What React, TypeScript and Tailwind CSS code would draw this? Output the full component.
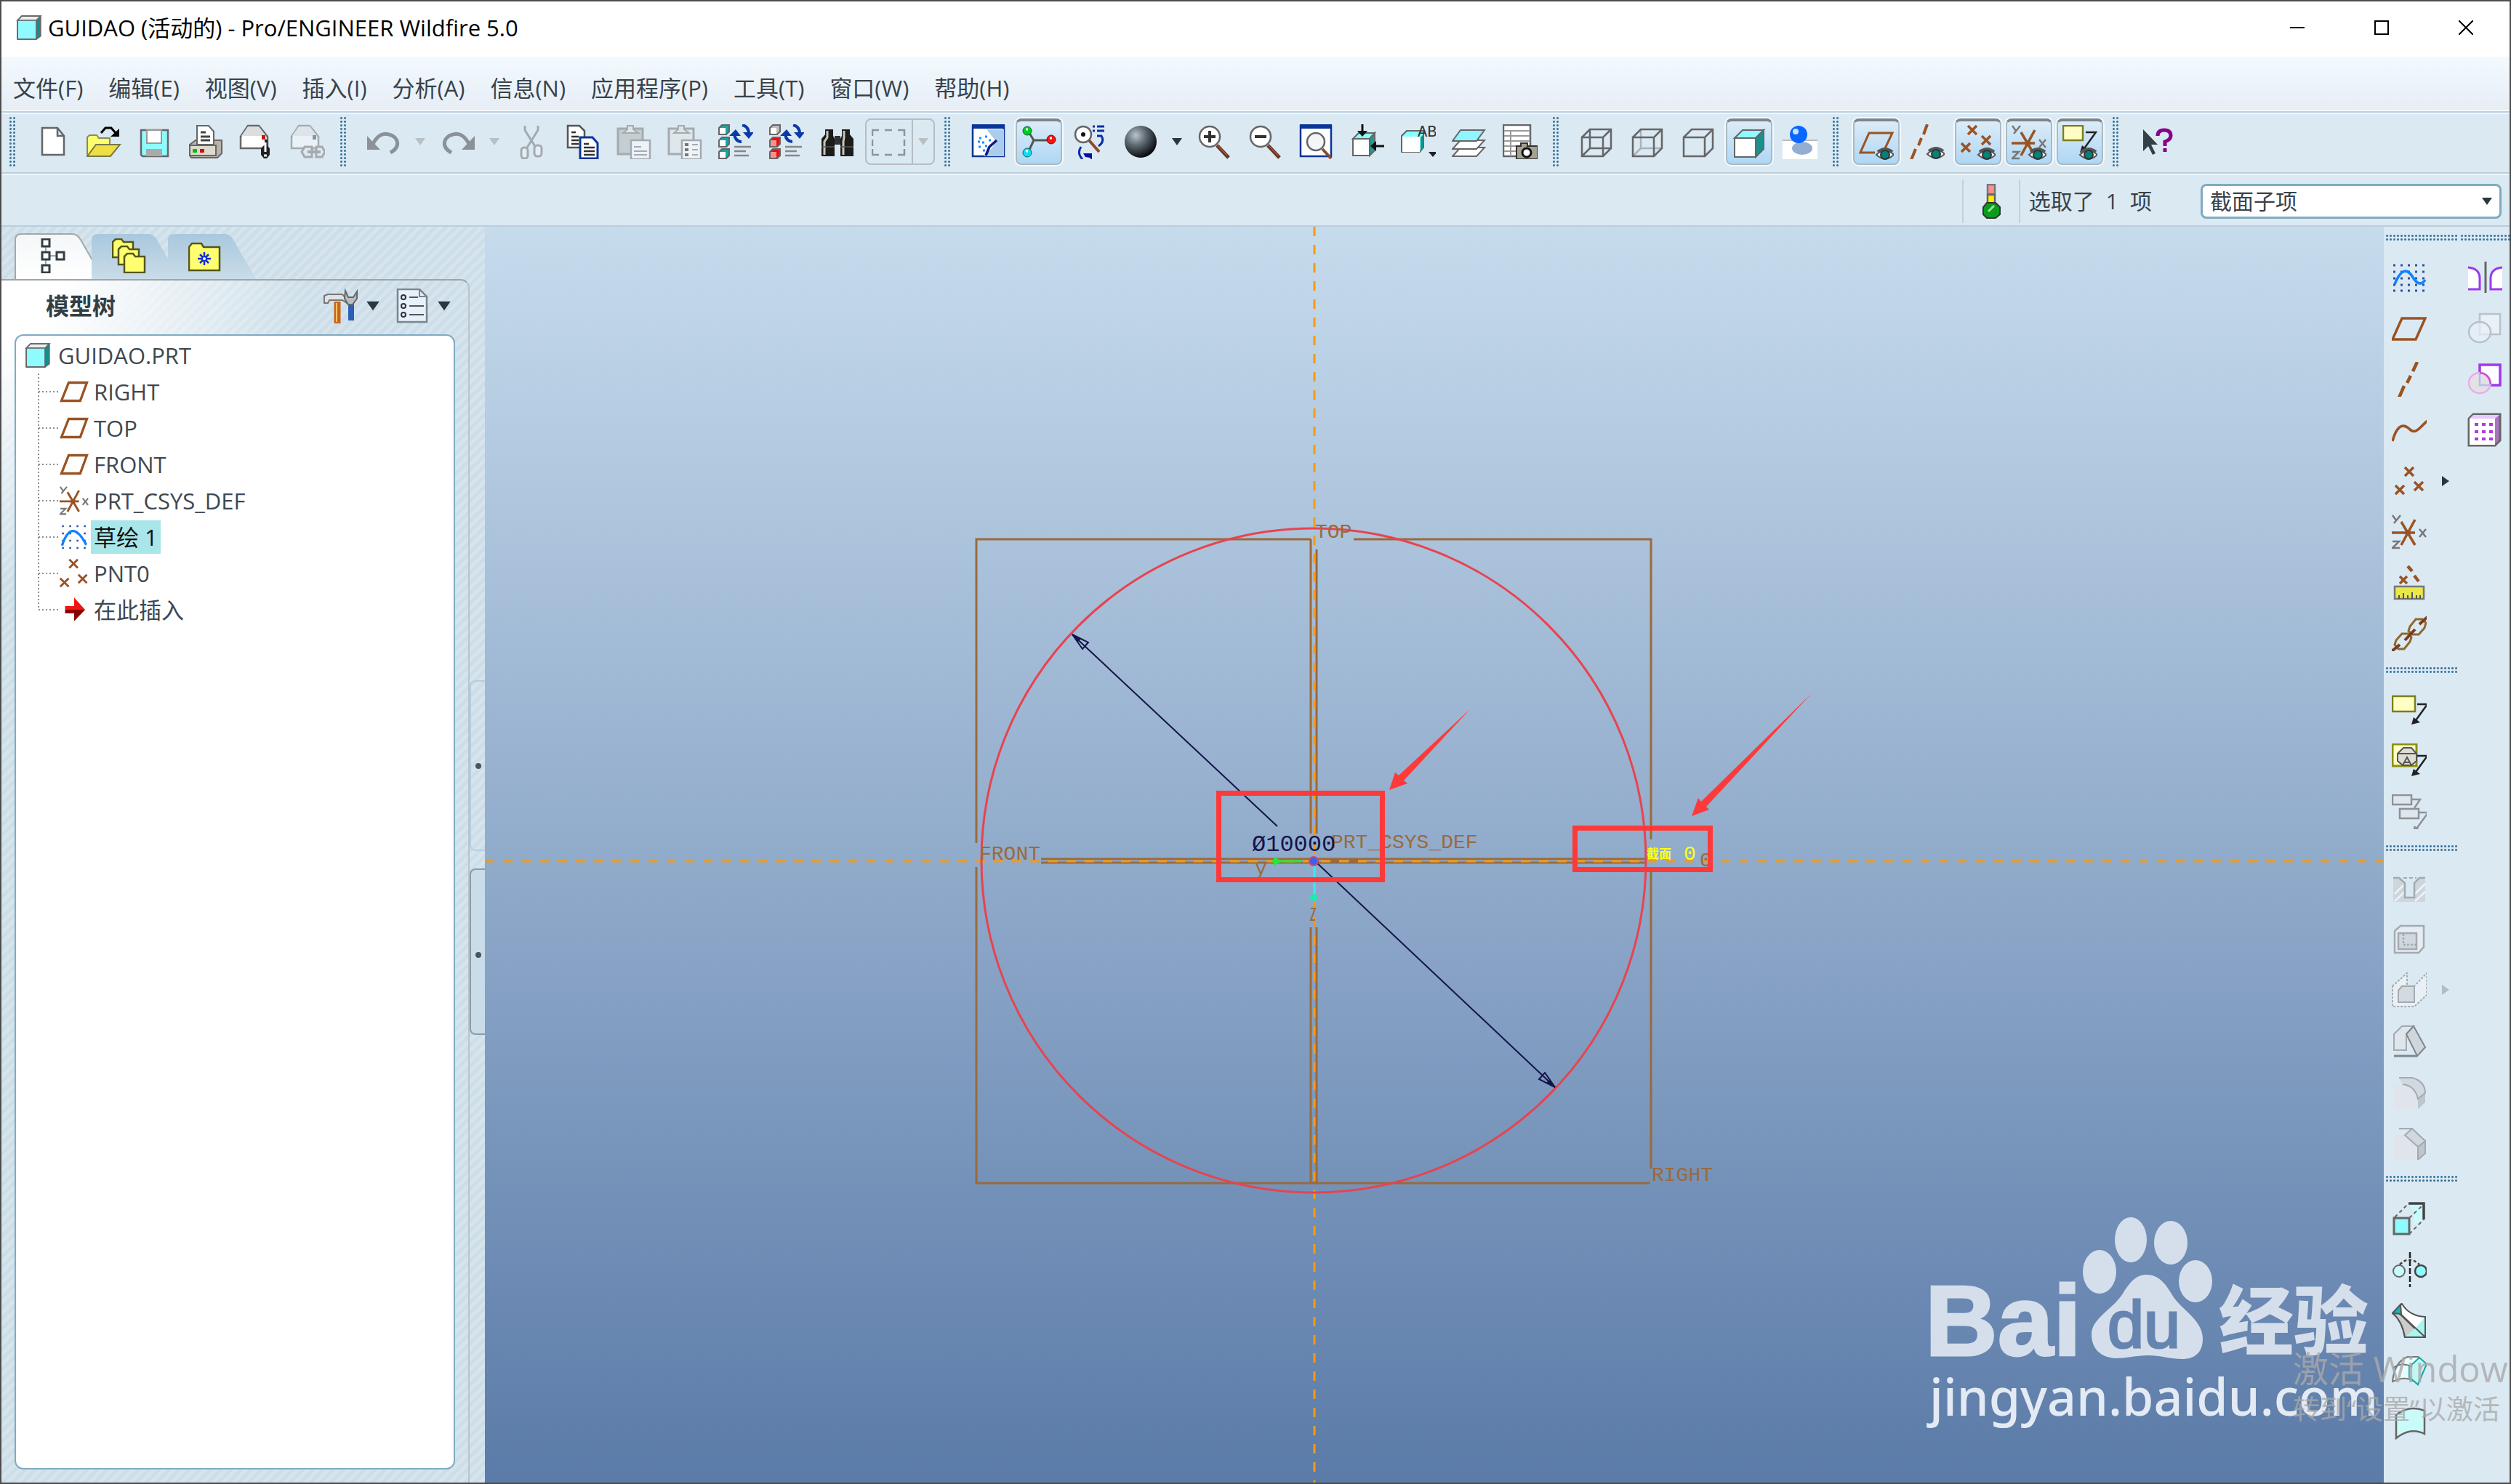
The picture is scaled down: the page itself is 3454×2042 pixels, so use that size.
import React from 'react';

type IconProps = { children: React.ReactNode; size?: string };

const Svg = ({ children, size = 'size-12' }: IconProps) => (
  <svg viewBox="0 0 48 48" className={`${size} shrink-0`} fill="none" aria-hidden="true">
    {children}
  </svg>
);

const BROWN = '#9a5323';
const GRAY = '#666666';
const DIM = '#a3abb0';

/* ---------- shared icon parts ---------- */

const Eye = () => (
  <g>
    <path d="M24 41Q36 29 48 41Q36 52 24 41Z" fill="#fff" stroke="#555" strokeWidth="2" />
    <path d="M26 37Q36 29 46 37" stroke="#555" strokeWidth="4" />
    <circle cx="36" cy="41" r="6" fill="#00837a" stroke="#333" strokeWidth="2" />
  </g>
);

const Lens = ({ sign }: { sign?: string }) => (
  <g>
    <path d="M27 29L43 46" stroke="#6b3322" strokeWidth="5" />
    <path d="M28 29L41 43" stroke="#b88466" strokeWidth="1" />
    <circle cx="17" cy="17" r="14" fill="#fff" stroke={GRAY} strokeWidth="2.5" />
    {sign && <path d={sign} stroke="#333" strokeWidth="4" />}
  </g>
);

const Marks = ({ at, s = 5 }: { at: number[][]; s?: number }) => (
  <path
    d={at.map(([x, y]) => `M${x - s} ${y - s}L${x + s} ${y + s}M${x + s} ${y - s}L${x - s} ${y + s}`).join('')}
    stroke={BROWN}
    strokeWidth="3.5"
  />
);

const Csys = () => (
  <g>
    <path d="M0 25H32M13 10L32 42M32 7L13 42" stroke={BROWN} strokeWidth="3.5" />
    <circle cx="22" cy="25" r="4" fill={BROWN} />
    <path d="M1 1L6 8M12 1L3 12M38 20L47 31M47 20L38 31M1 37H10L1 46H11" stroke="#777" strokeWidth="2.5" />
  </g>
);

const Leader = ({ x = 24, y = 12, color = '#222' }) => (
  <g transform={`translate(${x} ${y})`}>
    <path d="M10 0H24L6 25" stroke={color} strokeWidth="2.5" />
    <path d="M2 28L5 18L14 25Z" fill={color} />
  </g>
);

const Arrows = () => (
  <g>
    <path d="M22 14Q24 24 32 24M33 1Q42 3 42 13" stroke="#0a3aa8" strokeWidth="4" />
    <path d="M15 16L24 7L31 16ZM34 11H49L42 20Z" fill="#0a3aa8" />
    <path d="M22 31H45M22 37H38M22 43H42" stroke="#888" strokeWidth="2.5" />
  </g>
);

const MiniCube = ({ y, front, side }: { y: number; front: string; side: string }) => (
  <g>
    <path d={`M1 ${y + 4}L5 ${y}H15V${y + 9}L11 ${y + 13}H1Z`} fill={side} stroke={GRAY} strokeWidth="2" />
    <path d={`M2 ${y + 4}H10V${y + 12}H2Z`} fill={front} />
  </g>
);

const Envelope = ({ dim }: { dim?: boolean }) => (
  <g>
    <path d="M2 33V17L12 2H27L39 17V33Z" fill={dim ? '#eaf1f7' : '#fff'} stroke={dim ? DIM : GRAY} strokeWidth="2.5" />
    <path d="M3 16L12 3H27L37 16Z" fill={dim ? '#dde5ea' : '#ddd'} />
    <path d="M31 15H36V21H31Z" fill={dim ? '#8a9298' : '#c11'} />
  </g>
);

const Clipboard = ({ fill }: { fill: string }) => (
  <g>
    <path d="M2 6H36V41H2Z" fill={fill} stroke={DIM} strokeWidth="3" />
    <path d="M9 12L15 7V2H23V7L30 12Z" fill="#dfe6ea" stroke={DIM} strokeWidth="2" />
    <path d="M20 22H46V48H20Z" fill="#eef3f8" stroke={DIM} strokeWidth="2.5" />
  </g>
);

const ShadedCube = ({ front, top }: { front: string; top: string }) => (
  <g stroke={GRAY} strokeWidth="2">
    <path d="M4 18L15 7H44L33 18Z" fill={top} />
    <path d="M33 18L44 7V33L33 44Z" fill="#1b8f8c" />
    <path d="M4 18H33V44H4Z" fill={front} />
  </g>
);

const Caret = ({ dim, size = 'w-4 h-3' }: { dim?: boolean; size?: string }) => (
  <svg viewBox="0 0 16 12" className={size} aria-hidden="true">
    <path d="M1 1H15L8 11Z" fill={dim ? '#b9c0c4' : '#2c363c'} />
  </svg>
);

/* ---------- icon drawings ---------- */

const icons: Record<string, React.ReactNode> = {
  new: <path d="M9 5H30L39 16V42H9ZM30 5V16H39" fill="#fff" stroke={GRAY} strokeWidth="2.5" />,
  open: (
    <g>
      <path d="M1 44V18L4 15H14L17 19H32V30" fill="#ffff6e" stroke="#8a8a60" strokeWidth="2" />
      <path d="M1 44L13 28H46L33 44Z" fill="#efdf45" stroke="#77774a" strokeWidth="2" />
      <path d="M20 12L26 5H34L40 12" stroke="#000" strokeWidth="3" />
      <path d="M45 6V17H33Z" fill="#000" />
    </g>
  ),
  save: (
    <g>
      <path d="M5 8H42V44H7L5 42Z" fill="#8ffbff" stroke={GRAY} strokeWidth="2.5" />
      <path d="M13 8H33V26H13Z" fill="#fff" stroke="#999" strokeWidth="2" />
      <path d="M12 34H34V44H12Z" fill="#aaa" />
    </g>
  ),
  print: (
    <g stroke={GRAY} strokeWidth="2">
      <path d="M2 28L10 22H46V40L40 46H4L2 43Z" fill="#b9b4a8" />
      <path d="M2 29H38V43H2Z" fill="#dedad0" />
      <path d="M12 28V2H28L35 10V28Z" fill="#fff" />
      <path d="M17 11H24M17 17H30M17 22H30" stroke="#444" strokeWidth="3" />
      <path d="M6 34H12V39H6Z" fill="#0b0" stroke="none" />
      <path d="M16 34H22V39H16Z" fill="#c11" stroke="none" />
    </g>
  ),
  mail: (
    <g>
      <Envelope />
      <path d="M35 21H39V30L42 33V42L38 47H34L30 42V33L35 28Z" fill="#222" />
      <path d="M36 25V38M34 43H38" stroke="#fff" strokeWidth="3" />
    </g>
  ),
  mailLink: (
    <g>
      <Envelope dim />
      <path d="M20 31H30V45H20L16 38ZM36 31H44L48 38L44 45H36Z" fill="#e2e9ee" stroke={DIM} strokeWidth="3" />
      <path d="M24 38H42" stroke={DIM} strokeWidth="4" />
    </g>
  ),
  undo: (
    <g>
      <path d="M9 27C16 13 25 12 31 14C44 17 48 31 33 39" stroke="#8a9298" strokeWidth="5" />
      <path d="M1 16V35H19Z" fill="#8a9298" />
    </g>
  ),
  redo: (
    <g>
      <path d="M39 27C32 13 23 12 17 14C4 17 0 31 15 39" stroke="#8a9298" strokeWidth="5" />
      <path d="M47 16V35H29Z" fill="#8a9298" />
    </g>
  ),
  cut: (
    <g stroke={DIM} strokeWidth="3">
      <path d="M14 2V8L29 32M32 2V8L17 32" />
      <rect x="9" y="32" width="9" height="15" rx="4" fill="#e6edf1" />
      <rect x="27" y="29" width="10" height="15" rx="4" fill="#e6edf1" />
    </g>
  ),
  copy: (
    <g>
      <path d="M3 2H19L26 9V32H3Z" fill="#fff" stroke="#555" strokeWidth="2.5" />
      <path d="M8 11H14M8 17H18M8 22H18M8 27H18" stroke="#333" strokeWidth="2.5" />
      <path d="M20 18H37L44 26V47H20Z" fill="#fff" stroke="#0a3598" strokeWidth="3" />
      <path d="M25 27H32M25 32H40M25 37H40M25 42H40" stroke="#333" strokeWidth="2.5" />
    </g>
  ),
  paste: (
    <g>
      <Clipboard fill="#c3cdd2" />
      <path d="M24 31H34M24 37H42M24 42H42" stroke={DIM} strokeWidth="2" />
    </g>
  ),
  pasteSpecial: (
    <g>
      <Clipboard fill="#dfe7ed" />
      <path d="M24 28H29M24 35H29M24 42H29" stroke="#777" strokeWidth="4" />
      <path d="M34 28H42M34 35H42M34 42H42" stroke={DIM} strokeWidth="2" />
    </g>
  ),
  regen: (
    <g>
      <MiniCube y={1} front="#fff" side="#17a5a0" />
      <MiniCube y={18} front="#fff" side="#17a5a0" />
      <MiniCube y={34} front="#fff" side="#17a5a0" />
      <Arrows />
    </g>
  ),
  regenAll: (
    <g>
      <MiniCube y={1} front="#fff" side="#bbb" />
      <MiniCube y={18} front="#ff8f8f" side="#e01515" />
      <MiniCube y={34} front="#ff8f8f" side="#e01515" />
      <Arrows />
    </g>
  ),
  find: (
    <g>
      <path d="M7 7H18V16L20 20V44H2V20L7 14ZM30 7H41V14L46 20V44H28V20L30 16Z" fill="#1c1c1a" />
      <path d="M20 16H28V28H20Z" fill="#333" />
      <path d="M10 9V18L6 24V42M33 9V18L32 24V42" stroke="#c9c5b5" strokeWidth="3" />
      <path d="M2 31H20M28 31H46" stroke="#555" strokeWidth="1.5" />
    </g>
  ),
  marquee: <path d="M1 16V8H10M18 8H28M36 8H45V16M45 21V30M45 34V42H36M28 42H18M10 42H1V34M1 30V21" stroke="#8d9599" strokeWidth="2.5" />,
  sketchView: (
    <g>
      <path d="M3 2H46V44H3Z" fill="#fff" stroke="#0a3598" strokeWidth="2.5" />
      <path d="M22 7L46 7V44H18Q34 30 34 22Z" fill="#a9cdeb" />
      <path d="M2 0H47V6H2Z" fill="#0a3598" />
      <path d="M21 43L26 31L36 22" stroke="#17177c" strokeWidth="3.5" />
      <path d="M12 19h3M20 17h3M16 25h3M25 22h3M11 31h3M20 30h3M17 36h3M10 24h3" stroke="#1d8cff" strokeWidth="3" />
    </g>
  ),
  spin: (
    <g>
      <path d="M9 8L17 21L9 38M17 21H40" stroke="#555" strokeWidth="3" />
      <circle cx="8" cy="8" r="6" fill="#0c2" stroke="#063" />
      <circle cx="41" cy="20" r="6" fill="#f11" stroke="#800" />
      <circle cx="8" cy="38" r="6" fill="#1de" stroke="#066" />
      <path d="M6 6h3M39 18h3M6 36h3" stroke="#fff" strokeWidth="3" />
    </g>
  ),
  orientMode: (
    <g>
      <path d="M23 22L37 38" stroke="#8c4a2c" strokeWidth="4" />
      <circle cx="15" cy="14" r="11" fill="#fff" stroke={GRAY} strokeWidth="2.5" />
      <circle cx="15" cy="14" r="3" fill="#111" />
      <path d="M28 3H31M34 3H44M28 9H31M34 9H44M34 16H40Q45 24 36 30M12 31Q6 40 14 48" stroke="#0a2fa8" strokeWidth="3" />
      <path d="M15 40H27V49L24 46L18 45Z" fill="#0b0ba0" />
    </g>
  ),
  sphere: (
    <g>
      <defs>
        <radialGradient id="ball" cx="0.35" cy="0.3" r="0.7">
          <stop offset="0" stopColor="#b9c4cb" />
          <stop offset="0.45" stopColor="#5e6a72" />
          <stop offset="1" stopColor="#0c0f11" />
        </radialGradient>
      </defs>
      <circle cx="24" cy="24" r="22" fill="url(#ball)" />
    </g>
  ),
  zoomIn: <Lens sign="M9 17H25M17 9V25" />,
  zoomOut: <Lens sign="M9 17H25" />,
  refit: (
    <g>
      <path d="M2 2H44V44H2Z" fill="#fff" stroke="#0a3598" strokeWidth="2.5" />
      <path d="M1 0H45V6H1Z" fill="#0a3598" />
      <path d="M32 34L44 47" stroke="#8c4a2c" strokeWidth="4" />
      <circle cx="23" cy="24" r="12" fill="#f3f6f8" stroke={GRAY} strokeWidth="2.5" />
    </g>
  ),
  orient: (
    <g>
      <path d="M4 20L12 12H34L27 20Z" fill="#8ff" stroke={GRAY} strokeWidth="2" />
      <path d="M27 20L34 12V36L27 43Z" fill="#1b9c98" stroke={GRAY} strokeWidth="2" />
      <path d="M4 20H27V43H4Z" fill="#fff" stroke={GRAY} strokeWidth="2" />
      <path d="M17 0V12M32 30H47" stroke="#111" strokeWidth="3" />
      <path d="M10 9H24L17 17ZM36 23V37L28 30Z" fill="#111" />
    </g>
  ),
  savedViews: (
    <g>
      <path d="M1 16L8 9H31V32L26 38H1Z" fill="#8ff" stroke={GRAY} strokeWidth="2" />
      <path d="M2 17H26V38H2Z" fill="#fff" />
      <path d="M27 18V37L31 32V14Z" fill="#1b8f8c" />
      <text x="23" y="17" fontSize="22" fill="#333" fontFamily="Liberation Mono, monospace">AB</text>
      <path d="M38 38H50L44 45Z" fill="#222" />
    </g>
  ),
  layers: (
    <g stroke={GRAY} strokeWidth="2">
      <path d="M1 44L12 32H45L34 44Z" fill="#fff" />
      <path d="M1 34L12 22H45L34 34Z" fill="#fff" />
      <path d="M1 23L12 8H45L34 23Z" fill="#8ff6ff" />
    </g>
  ),
  viewManager: (
    <g>
      <path d="M1 1H38V44H1Z" fill="#fff" stroke={GRAY} strokeWidth="2.5" />
      <path d="M2 9H38M2 16H38M2 23H38M2 30H20M2 37H20M11 9V44" stroke="#999" strokeWidth="2" />
      <path d="M19 30H25V26H34V30H48V48H19Z" fill="#a5a294" stroke="#333" strokeWidth="2" />
      <circle cx="33" cy="39" r="6" fill="#fff" stroke="#111" strokeWidth="3" />
    </g>
  ),
  wireframe: <path d="M4 18H33V44H4ZM15 7H44V33H15ZM4 18L15 7M33 18L44 7M33 44L44 33M4 44L15 33" stroke={GRAY} strokeWidth="2.5" />,
  hiddenLine: (
    <g strokeWidth="2.5">
      <path d="M15 8V33H43M4 44L15 33" stroke="#aab2b8" />
      <path d="M4 18H33V44H4ZM4 18L15 7H44V33L33 44M33 18L44 7" stroke={GRAY} />
    </g>
  ),
  noHidden: <path d="M4 18H33V44H4ZM4 18L15 7H44V33L33 44M33 18L44 7" stroke={GRAY} strokeWidth="2.5" />,
  shading: <ShadedCube front="#fff" top="#8ffbff" />,
  realism: (
    <g>
      <path d="M0 22H48V49H0Z" fill="#fff" />
      <path d="M0 22H48" stroke="#bbb" strokeWidth="2" />
      <ellipse cx="27" cy="33" rx="14" ry="9" fill="#94aed3" />
      <circle cx="22" cy="14" r="12" fill="#0a66ff" />
      <circle cx="18" cy="10" r="4" fill="#c5e2ff" />
    </g>
  ),
  planeShow: (
    <g>
      <path d="M22 38H2L14 11H46L36 32" stroke={BROWN} strokeWidth="3" />
      <Eye />
    </g>
  ),
  axisShow: (
    <g>
      <path d="M24 0L19 14M16 19L12 29M8 34L2 49" stroke={BROWN} strokeWidth="4" />
      <Eye />
    </g>
  ),
  pointShow: (
    <g>
      <Marks at={[[16, 7], [35, 21], [7, 31]]} s={6} />
      <Eye />
    </g>
  ),
  csysShow: (
    <g>
      <Csys />
      <Eye />
    </g>
  ),
  noteShow: (
    <g>
      <path d="M1 1H28V21H1Z" fill="#ffffc4" stroke="#7d7d1c" strokeWidth="2.5" />
      <Leader x={22} y={10} />
      <Eye />
    </g>
  ),
  help: (
    <g>
      <path d="M6 7V37L13 30L19 42L23 40L17 28H26Z" fill="#333e45" />
      <path d="M26 16Q26 8 35 8Q44 8 44 16Q44 21 36 24V30M36 33V38" stroke="#870087" strokeWidth="5" />
    </g>
  ),
  sketch: (
    <g>
      <path d="M2 7H46M2 16H46M2 25H46M2 34H46M2 42H46" stroke="#2b52a8" strokeWidth="3" strokeDasharray="3 7" />
      <path d="M4 33Q16 4 28 22Q38 39 46 27" stroke="#0d82ff" strokeWidth="3.5" />
    </g>
  ),
  plane: <path d="M1 39L14 10H46L33 39Z" stroke={BROWN} strokeWidth="3.5" />,
  planeSmall: <path d="M3 39L15 9H45L34 39Z" stroke={BROWN} strokeWidth="4" />,
  axis: <path d="M35 0L29 13M26 19L21 29M17 33L10 49" stroke={BROWN} strokeWidth="4.5" />,
  curve: <path d="M1 39C6 20 14 13 24 22C33 32 40 18 49 11" stroke={BROWN} strokeWidth="3.5" />,
  points: <Marks at={[[24, 11], [11, 36], [37, 31]]} s={6} />,
  pointsSmall: <Marks at={[[23, 8], [8, 39], [38, 33]]} s={7} />,
  csys: <Csys />,
  measure: (
    <g>
      <Marks at={[[16, 20]]} />
      <path d="M22 1L28 8M31 14L37 22" stroke={BROWN} strokeWidth="4.5" />
      <path d="M4 29H44V46H4Z" fill="#e8e84a" stroke="#777" strokeWidth="2.5" />
      <path d="M10 46V41M16 46V38M22 46V41M28 46V37M34 46V41M39 46V41" stroke="#555" strokeWidth="2" />
    </g>
  ),
  chain: (
    <g stroke="#8f6a2c" strokeWidth="3">
      <path d="M4 39L6 33L14 24H23L27 29L25 35L17 45H9ZM23 20L25 14L33 4H42L47 9L45 16L37 25H28Z" />
      <path d="M0 48L11 39M18 33L32 18M38 11L49 1" strokeWidth="4" stroke="#7a3b22" />
    </g>
  ),
  note: (
    <g>
      <path d="M1 5H32V26H1Z" fill="#ffffc4" stroke="#7d7d1c" strokeWidth="2.5" />
      <Leader x={25} y={16} />
    </g>
  ),
  noteSymbol: (
    <g>
      <path d="M1 1H34V31H1Z" fill="#ffffc4" stroke="#8d8d10" strokeWidth="3" />
      <path d="M8 14L16 6H27L34 14V24L27 30H15L8 24ZM8 14H34M15 30L21 19L27 30M18 26H24" fill="#dfded6" stroke="#555" strokeWidth="2" />
      <Leader x={25} y={17} />
    </g>
  ),
  noteMulti: (
    <g>
      <path d="M1 1H27V14H1ZM11 20H37V33H11Z" fill="#dfe7ed" stroke="#8b9398" strokeWidth="2.5" />
      <path d="M27 7H39L31 19" stroke="#8b9398" strokeWidth="2.5" />
      <Leader x={26} y={25} color="#8b9398" />
    </g>
  ),
  hole: (
    <g>
      <path d="M2 10H10L18 17V37H31V17L38 10H46V43H2Z" fill="#cdd6dc" />
      <path d="M4 32L16 20M4 42L18 29M32 32L46 18M32 42L46 29" stroke="#eef3f7" strokeWidth="2.5" />
      <path d="M2 10H10L18 17V37H31V17L38 10H46" stroke={DIM} strokeWidth="2.5" />
      <path d="M16 10H34" stroke={DIM} strokeWidth="2" strokeDasharray="5 3" />
    </g>
  ),
  shell: (
    <g stroke={DIM} strokeWidth="2.5">
      <path d="M4 13L12 6H44V35L37 43H4Z" fill="#e6edf2" />
      <path d="M9 16H34V38H9Z" fill="#cfd8de" />
      <path d="M16 17V32H33" strokeDasharray="3 2" />
    </g>
  ),
  rib: (
    <g stroke={DIM} strokeWidth="2">
      <path d="M1 19L21 1V24L31 19L48 1V31L31 47H1Z" fill="#e9f0f5" strokeDasharray="3 2" />
      <path d="M9 25L14 19H31V41H9Z" fill="#d3dbe1" />
    </g>
  ),
  draft: (
    <g stroke={DIM} strokeWidth="2">
      <path d="M3 15L14 4H30L20 15V37H3Z" fill="#dfe6eb" />
      <path d="M20 15L30 4L46 33L35 45Z" fill="#cfd7dd" stroke="#7f878c" />
      <path d="M3 45H35" stroke="#7f878c" strokeWidth="3" />
    </g>
  ),
  round: (
    <g>
      <path d="M3 14H18Q34 20 36 33V48H3Z" fill="#dfe5ea" />
      <path d="M36 34L46 26V39L36 48Z" fill="#bcc6cc" />
      <path d="M10 5H28Q46 10 46 26L36 34Q32 16 15 14" fill="#d0d9df" stroke={DIM} strokeWidth="2" />
    </g>
  ),
  chamfer: (
    <g>
      <path d="M3 14H18L36 30V48H3Z" fill="#dfe5ea" />
      <path d="M36 30L46 22V39L36 48Z" fill="#bcc6cc" stroke={DIM} strokeWidth="2" />
      <path d="M10 5H28L46 22L36 30L18 14L28 5" fill="#d0d9df" stroke={DIM} strokeWidth="2" />
    </g>
  ),
  extrude: (
    <g>
      <path d="M23 3H44V25L31 32V14Z" fill="#c9fbfb" />
      <path d="M23 3H44V25" stroke="#444" strokeWidth="3.5" />
      <path d="M4 22L23 3M24 23L44 4M24 45L44 25" stroke="#666" strokeWidth="2" strokeDasharray="5 4" />
      <path d="M3 23H24V45H3Z" fill="#8ffbff" stroke={GRAY} strokeWidth="3" />
    </g>
  ),
  revolve: (
    <g>
      <path d="M11 17Q24 4 38 17" stroke="#444" strokeWidth="2.5" strokeDasharray="4 3" />
      <circle cx="10" cy="26" r="8" fill="#c9fbfb" stroke={GRAY} strokeWidth="2" />
      <circle cx="40" cy="26" r="8" fill="#8ffbff" stroke="#444" strokeWidth="2.5" />
      <path d="M25 0V48" stroke="#222" strokeWidth="2.5" strokeDasharray="8 3" />
    </g>
  ),
  blend: (
    <g stroke="#555" strokeWidth="2">
      <path d="M1 14L14 1Q24 18 46 19V47H18Q14 24 1 14Z" fill="#fff" />
      <path d="M1 14Q14 24 18 47H44L10 14Z" fill="#ccc" />
      <path d="M46 19V47H18L34 33Z" fill="#a9f5f0" stroke="none" />
      <path d="M46 19V47H18M12 15L46 47" />
      <path d="M1 14L12 2L13 15Z" fill="#19b5b5" />
    </g>
  ),
  boundary: (
    <g stroke="#777" strokeWidth="2">
      <path d="M1 38Q4 10 22 4H36L48 14Q40 26 36 42Q22 28 1 38Z" fill="#eafcfc" />
      <path d="M24 18L38 5L48 14L36 42L24 32Z" fill="#c0f7f5" stroke="#17a8a0" />
      <path d="M1 20Q14 10 28 18" />
    </g>
  ),
  style: <path d="M6 46V14Q24 0 45 8V40Q26 30 6 46Z" fill="#c9fbf8" stroke="#666" strokeWidth="2.5" />,
  mirror: (
    <g>
      <path d="M1 10Q16 10 17 24V40H1ZM48 10Q33 12 32 24V40H48Z" fill="#fff" />
      <path d="M1 10Q16 11 17 24V40H1M48 10Q33 11 32 24V40H48" stroke="#9b3bea" strokeWidth="3" />
      <path d="M25 2V45" stroke="#666" strokeWidth="3" />
    </g>
  ),
  merge: (
    <g fill="#e8f0f8" stroke="#b8c2c8" strokeWidth="2.5">
      <path d="M17 4H45V32H17Z" />
      <ellipse cx="17" cy="29" rx="15" ry="14" fillOpacity="0.7" />
    </g>
  ),
  trim: (
    <g strokeWidth="2.5">
      <path d="M17 4H45V32H17Z" fill="#fff" stroke="#9b3bea" strokeWidth="3.5" />
      <ellipse cx="17" cy="29" rx="15" ry="14" fill="#e2e2e4" stroke="#f0a8f0" />
      <path d="M17 16V32H31" stroke="#b5bdf5" />
      <path d="M17 15Q30 16 32 31" stroke="#d050d0" />
    </g>
  ),
  pattern: (
    <g>
      <path d="M2 8L8 2H45V38L38 45H2Z" fill="#a874bd" stroke="#666" strokeWidth="3" />
      <path d="M3 8L8 3H44L38 8Z" fill="#e8c8ff" />
      <path d="M3 8H38V44H3Z" fill="#fff" />
      <path d="M10 16h5M20 16h5M30 16h5M10 26h5M20 26h5M30 26h5M10 36h5M20 36h5M30 36h5" stroke="#b03be0" strokeWidth="4" />
    </g>
  ),
  filterLight: (
    <g>
      <path d="M19 1H29V14H19Z" fill="#ff8f8f" stroke="#777" strokeWidth="2.5" />
      <path d="M19 15H29V27H19Z" fill="#ffee00" stroke="#666" strokeWidth="2.5" />
      <path d="M18 26H30L36 32V42L30 47H18L13 42V32Z" fill="#0c9c1c" stroke="#333" strokeWidth="2" />
      <path d="M20 38L28 30" stroke="#8fe88f" strokeWidth="3" />
    </g>
  ),
  part: (
    <g stroke={GRAY} strokeWidth="2">
      <path d="M5 12L12 5H43V38L36 43H5Z" fill="#128f8c" />
      <path d="M5 12L12 5H43L36 12Z" fill="#eee" />
      <path d="M5 12H36V43H5Z" fill="#8ffbff" />
    </g>
  ),
  tree: (
    <g stroke="#333e45" strokeWidth="3" fill="#fff">
      <path d="M14 12V36M20 24H28" stroke="#9aa" strokeWidth="2" />
      <path d="M9 1H19V11H9ZM9 19H19V29H9ZM9 37H19V47H9ZM29 19H39V29H29Z" />
    </g>
  ),
  folders: (
    <g fill="#ffff70" stroke="#55551c" strokeWidth="2.5">
      <path d="M1 5L5 1H13L16 5H29V26H1Z" />
      <path d="M9 15L13 11H21L24 15H37V36H9Z" />
      <path d="M17 25L21 21H29L32 25H45V47H17Z" />
    </g>
  ),
  favorites: (
    <g>
      <path d="M1 12L5 7H18L21 12H43V44H1Z" fill="#ffff70" stroke="#55551c" strokeWidth="2.5" />
      <path d="M22 19V37M13 28H31M16 22L28 34M28 22L16 34" stroke="#1030d8" strokeWidth="2.5" />
      <circle cx="22" cy="28" r="3" fill="#fff" stroke="#1030d8" strokeWidth="2" />
    </g>
  ),
  tools: (
    <g>
      <path d="M19 18V48" stroke="#c8641e" strokeWidth="9" />
      <path d="M18 20V46" stroke="#ffc45c" strokeWidth="2" />
      <path d="M38 20V44" stroke="#2a5fb8" strokeWidth="8" />
      <path d="M1 10L6 8H26L32 15V20L26 16H8L6 20H1Z" fill="#dfe3e6" stroke="#777" strokeWidth="2" />
      <path d="M30 3L34 12H41L46 4V14L40 22H34L29 14Z" fill="#b9bec2" stroke="#666" strokeWidth="2" />
    </g>
  ),
  list: (
    <g>
      <path d="M4 1H34L44 11V46H4Z" fill="#e6f1fb" stroke="#7a858c" strokeWidth="2.5" />
      <path d="M34 1V11H44" stroke="#7a858c" strokeWidth="2" />
      <path d="M20 12H32M20 24H40M20 36H40" stroke="#555" strokeWidth="2" />
      <circle cx="12" cy="12" r="3" stroke="#333" strokeWidth="2" />
      <circle cx="12" cy="24" r="3" stroke="#333" strokeWidth="2" />
      <circle cx="12" cy="36" r="3" stroke="#333" strokeWidth="2" />
    </g>
  ),
  sketchSmall: (
    <g>
      <path d="M4 6H46M4 18H46M4 30H46M4 42H46" stroke="#2b52a8" strokeWidth="3" strokeDasharray="3 9" />
      <path d="M4 38Q12 14 22 14Q32 14 44 37" stroke="#0d82ff" strokeWidth="4" />
    </g>
  ),
  insert: (
    <g>
      <path d="M9 18H24V4L42 24H9Z" fill="#f31212" />
      <path d="M9 24H42L24 43V30H9Z" fill="#8a0000" />
    </g>
  ),
};

/* ---------- toolbars ---------- */

type Tool = { icon: string; label: string; pressed?: boolean; menu?: boolean; dim?: boolean };

const toolGroups: Tool[][] = [
  [
    { icon: 'new', label: '新建' },
    { icon: 'open', label: '打开' },
    { icon: 'save', label: '保存' },
    { icon: 'print', label: '打印' },
    { icon: 'mail', label: '发送邮件' },
    { icon: 'mailLink', label: '发送链接', dim: true },
  ],
  [
    { icon: 'undo', label: '撤消', menu: true, dim: true },
    { icon: 'redo', label: '重做', menu: true, dim: true },
    { icon: 'cut', label: '剪切', dim: true },
    { icon: 'copy', label: '复制' },
    { icon: 'paste', label: '粘贴', dim: true },
    { icon: 'pasteSpecial', label: '选择性粘贴', dim: true },
    { icon: 'regen', label: '再生' },
    { icon: 'regenAll', label: '再生管理器' },
    { icon: 'find', label: '查找' },
    { icon: 'marquee', label: '选取框', dim: true },
  ],
  [
    { icon: 'sketchView', label: '重画' },
    { icon: 'spin', label: '旋转中心', pressed: true },
    { icon: 'orientMode', label: '定向模式' },
    { icon: 'sphere', label: '外观库', menu: true },
    { icon: 'zoomIn', label: '放大' },
    { icon: 'zoomOut', label: '缩小' },
    { icon: 'refit', label: '重新调整' },
    { icon: 'orient', label: '重定向' },
    { icon: 'savedViews', label: '已命名视图' },
    { icon: 'layers', label: '层' },
    { icon: 'viewManager', label: '视图管理器' },
  ],
  [
    { icon: 'wireframe', label: '线框' },
    { icon: 'hiddenLine', label: '隐藏线' },
    { icon: 'noHidden', label: '无隐藏线' },
    { icon: 'shading', label: '着色', pressed: true },
    { icon: 'realism', label: '增强真实感' },
  ],
  [
    { icon: 'planeShow', label: '平面显示', pressed: true },
    { icon: 'axisShow', label: '轴显示' },
    { icon: 'pointShow', label: '点显示', pressed: true },
    { icon: 'csysShow', label: '坐标系显示', pressed: true },
    { icon: 'noteShow', label: '注释显示', pressed: true },
  ],
  [{ icon: 'help', label: '帮助' }],
];

const sideGroups: Tool[][] = [
  [
    { icon: 'sketch', label: '草绘' },
    { icon: 'plane', label: '平面' },
    { icon: 'axis', label: '轴' },
    { icon: 'curve', label: '曲线' },
    { icon: 'points', label: '点', menu: true },
    { icon: 'csys', label: '坐标系' },
    { icon: 'measure', label: '分析' },
    { icon: 'chain', label: '参照' },
  ],
  [
    { icon: 'note', label: '注释' },
    { icon: 'noteSymbol', label: '注释特征' },
    { icon: 'noteMulti', label: '传播注释', dim: true },
  ],
  [
    { icon: 'hole', label: '孔', dim: true },
    { icon: 'shell', label: '壳', dim: true },
    { icon: 'rib', label: '筋', menu: true, dim: true },
    { icon: 'draft', label: '拔模', dim: true },
    { icon: 'round', label: '倒圆角', dim: true },
    { icon: 'chamfer', label: '倒角', dim: true },
  ],
  [
    { icon: 'extrude', label: '拉伸' },
    { icon: 'revolve', label: '旋转' },
    { icon: 'blend', label: '可变截面扫描' },
    { icon: 'boundary', label: '边界混合' },
    { icon: 'style', label: '造型' },
  ],
];

const editTools: Tool[] = [
  { icon: 'mirror', label: '镜像' },
  { icon: 'merge', label: '合并', dim: true },
  { icon: 'trim', label: '修剪' },
  { icon: 'pattern', label: '阵列' },
];

const ToolButton = ({ tool }: { tool: Tool }) => (
  <button
    type="button"
    aria-label={tool.label}
    aria-pressed={tool.pressed}
    className={`size-16 shrink-0 flex items-center justify-center rounded-lg ${
      tool.pressed
        ? 'border-2 border-t-4 border-[#a9bac6] border-t-[#7b868d] bg-linear-to-b from-[#dcebf7] to-[#aed7f5] shadow-[0_0_0_2px_#f4f9fc]'
        : ''
    }`}
  >
    <Svg>{icons[tool.icon]}</Svg>
  </button>
);

const VGrip = () => (
  <div className="w-[10px] h-[70px] -my-1 shrink-0 bg-[radial-gradient(circle,#3f789f_1px,transparent_2px)] bg-[length:5px_5px]" />
);

const HGrip = () => (
  <div className="h-[10px] w-full bg-[radial-gradient(circle,#3f789f_1px,transparent_2px)] bg-[length:5px_5px]" />
);

const TopToolbar = () => (
  <div
    role="toolbar"
    className="flex items-center pt-2 pb-[10px] pl-2.5 border-t-2 border-[#b9cfde] bg-[#dbe9f3] shadow-[inset_0_2px_#f0f7fb,0_-2px_#f4f8fb]"
  >
    {toolGroups.map((group, i) => (
      <React.Fragment key={i}>
        <VGrip />
        <div className="flex items-center gap-1.5 ml-[19px] mr-3">
          {group.map(tool => {
            if (tool.icon === 'marquee') {
              return (
                <div key={tool.icon} className="flex h-16 border-2 border-[#b5bec3] rounded-lg">
                  <button type="button" aria-label={tool.label} className="w-16 flex items-center justify-center border-r-2 border-[#b5bec3]">
                    <Svg>{icons.marquee}</Svg>
                  </button>
                  <button type="button" aria-label="选取框菜单" className="w-7 flex items-center justify-center">
                    <Caret dim />
                  </button>
                </div>
              );
            }
            return (
              <React.Fragment key={tool.icon}>
                <ToolButton tool={tool} />
                {tool.menu && (
                  <button type="button" aria-label={`${tool.label}菜单`} className="w-6 h-16 mr-0.5 flex items-center justify-center">
                    <Caret dim={tool.dim} />
                  </button>
                )}
              </React.Fragment>
            );
          })}
        </div>
      </React.Fragment>
    ))}
  </div>
);

const SideToolbar = () => (
  <div className="w-[173px] shrink-0 flex gap-1 pt-2.5 bg-[#dbe9f3] overflow-hidden">
    <div role="toolbar" className="w-[101px] shrink-0 pl-0.5">
      {sideGroups.map((group, i) => (
        <React.Fragment key={i}>
          <HGrip />
          <div className="flex flex-col gap-1.5 pt-[18px] pb-[13px] pl-px">
            {group.map(tool => (
              <div key={tool.icon} className="flex items-center gap-3">
                <ToolButton tool={tool} />
                {tool.menu && (
                  <button type="button" aria-label={`${tool.label}菜单`} className="h-16 w-4">
                    <svg viewBox="0 0 12 16" className="w-3 h-4" aria-hidden="true">
                      <path d="M1 1V15L11 8Z" fill={tool.dim ? '#b4bcc1' : '#2c363c'} />
                    </svg>
                  </button>
                )}
              </div>
            ))}
          </div>
        </React.Fragment>
      ))}
    </div>
    <div role="toolbar" className="flex-1">
      <HGrip />
      <div className="flex flex-col gap-1.5 pt-[18px] pl-0.5">
        {editTools.map(tool => (
          <ToolButton key={tool.icon} tool={tool} />
        ))}
      </div>
    </div>
  </div>
);

/* ---------- window chrome ---------- */

const menus = ['文件(F)', '编辑(E)', '视图(V)', '插入(I)', '分析(A)', '信息(N)', '应用程序(P)', '工具(T)', '窗口(W)', '帮助(H)'];

const TitleBar = () => (
  <header className="h-19 flex items-center bg-white pl-[18px] pr-0.5 pb-1">
    <Svg size="size-10">{icons.part}</Svg>
    <h1 className="flex-1 ml-1.5 text-[31px] text-black">GUIDAO (活动的) - Pro/ENGINEER Wildfire 5.0</h1>
    <button type="button" aria-label="最小化" className="w-29 h-full flex items-center justify-center">
      <svg viewBox="0 0 20 20" className="size-5" aria-hidden="true"><path d="M0 10H20" stroke="#000" strokeWidth="2" /></svg>
    </button>
    <button type="button" aria-label="最大化" className="w-29 h-full flex items-center justify-center">
      <svg viewBox="0 0 20 20" className="size-5" fill="none" aria-hidden="true"><path d="M1 1H19V19H1Z" stroke="#000" strokeWidth="2" /></svg>
    </button>
    <button type="button" aria-label="关闭" className="w-29 h-full flex items-center justify-center">
      <svg viewBox="0 0 20 20" className="size-5" aria-hidden="true"><path d="M0 0L20 20M20 0L0 20" stroke="#000" strokeWidth="2" /></svg>
    </button>
  </header>
);

const MenuBar = () => (
  <nav className="flex gap-[35px] pl-4 pt-[23px] pb-3 bg-linear-to-b from-[#f2faff] to-[#e6edf5]">
    {menus.map(m => (
      <button key={m} type="button" className="text-[31px] leading-10 text-[#38424a]">{m}</button>
    ))}
  </nav>
);

const StatusBar = () => (
  <div className="flex items-center justify-end pt-2 pb-[3px] pr-[11px] border-t-2 border-[#b9cfde] bg-[#dbe9f3] shadow-[inset_0_2px_#f0f7fb] text-[30px] text-[#38424a]">
    <div className="h-15 border-x-2 border-[#c3d1dc] w-20 mr-1 flex items-center justify-center">
      <Svg>{icons.filterLight}</Svg>
    </div>
    <p className="flex gap-4 ml-2 mr-[67px] leading-10">
      <span>选取了</span>
      <span>1</span>
      <span>项</span>
    </p>
    <div className="relative w-[414px]">
      <select
        aria-label="选取过滤器"
        className="w-full h-12 pl-2.5 pr-10 appearance-none rounded-lg border-[3px] border-[#7fabc2] bg-white leading-10"
      >
        <option>截面子项</option>
      </select>
      <span className="absolute right-3 top-4.5 pointer-events-none"><Caret /></span>
    </div>
  </div>
);

/* ---------- model tree ---------- */

const treeItems = [
  { icon: 'planeSmall', label: 'RIGHT' },
  { icon: 'planeSmall', label: 'TOP' },
  { icon: 'planeSmall', label: 'FRONT' },
  { icon: 'csys', label: 'PRT_CSYS_DEF' },
  { icon: 'sketchSmall', label: '草绘 1', selected: true },
  { icon: 'pointsSmall', label: 'PNT0' },
  { icon: 'insert', label: '在此插入' },
];

const tabs = [
  { icon: 'tree', label: '模型树', active: true },
  { icon: 'folders', label: '文件夹浏览器' },
  { icon: 'favorites', label: '收藏夹' },
];

const ModelTree = () => (
  <aside className="w-[665px] shrink-0 flex bg-[#cfdfe9] bg-[repeating-linear-gradient(135deg,#cddee8_0px,#cddee8_5px,#d5e4ed_5px,#d5e4ed_10px)]">
    <div className="flex-1 flex flex-col">
      <div role="tablist" className="flex pt-2 pl-4.5">
        {tabs.map(tab => (
          <button key={tab.icon} type="button" role="tab" aria-label={tab.label} aria-selected={!!tab.active} className="relative w-[105px] h-16">
            <svg viewBox="0 0 124 64" className="absolute left-0 top-0 w-[124px] h-16" aria-hidden="true">
              <defs>
                <linearGradient id={`tab-${tab.icon}`} x1="0" y1="0" x2="0" y2="1">
                  <stop offset="0" stopColor={tab.active ? '#f4f6f8' : '#a9c8de'} />
                  <stop offset="1" stopColor={tab.active ? '#ffffff' : '#c9dce8'} />
                </linearGradient>
              </defs>
              <path
                d="M1 64V10Q1 2 9 2H80Q86 2 91 10L122 64"
                fill={`url(#tab-${tab.icon})`}
                stroke={tab.active ? '#a3a8ab' : 'none'}
                strokeWidth="2"
              />
            </svg>
            <span className="relative flex justify-center"><Svg>{icons[tab.icon]}</Svg></span>
          </button>
        ))}
      </div>
      <div className="flex-1 flex flex-col border-t-2 border-r-2 border-t-[#9fa5a8] border-r-[#b9c4cb] rounded-tr-xl bg-[radial-gradient(circle_at_top_left,#ffffff_0px,#ffffff_80px,transparent_420px)]">
        <div className="flex items-center h-[74px] pb-1 pl-[61px] pr-[23px]">
          <h2 className="flex-1 text-[32px] font-bold text-[#333e45]">模型树</h2>
          <button type="button" aria-label="设置" className="flex items-center gap-2.5 mr-5">
            <Svg>{icons.tools}</Svg>
            <Caret size="w-5 h-4" />
          </button>
          <button type="button" aria-label="显示" className="flex items-center gap-2.5">
            <Svg>{icons.list}</Svg>
            <Caret size="w-5 h-4" />
          </button>
        </div>
        <div className="flex-1 ml-4.5 mr-4.5 mb-4.5 pt-0.5 border-2 border-[#7fabc2] rounded-xl bg-white text-[31px] text-[#3e4850]">
          <div className="flex items-center h-[50px] pl-2.5">
            <Svg size="size-10">{icons.part}</Svg>
            <span className="ml-2">GUIDAO.PRT</span>
          </div>
          <ul className="pl-[30px]">
            {treeItems.map((item, i) => (
              <li key={item.label} className="flex items-center h-[50px]">
                <svg viewBox="0 0 30 50" className="w-[30px] h-[50px]" aria-hidden="true">
                  <path
                    d={i === treeItems.length - 1 ? 'M1 0V25H30' : 'M1 0V50M1 25H30'}
                    fill="none"
                    stroke="#8f8f8f"
                    strokeWidth="2"
                    strokeDasharray="2 3"
                  />
                </svg>
                <Svg size="size-10">{icons[item.icon]}</Svg>
                <span className={`ml-[3px] px-1 leading-[46px] ${item.selected ? 'bg-[#a8e6e9] text-[#111]' : ''}`}>{item.label}</span>
              </li>
            ))}
          </ul>
        </div>
      </div>
    </div>
    <div className="w-[21px] flex flex-col justify-center gap-6 pt-2">
      <div className="h-[235px] flex items-center justify-center border-2 border-r-0 border-[#b3cfe2] rounded-l-lg">
        <span className="size-2 rounded-full bg-[#4a545b]" />
      </div>
      <div className="h-[229px] flex items-center justify-center pt-2 border-2 border-r-0 border-[#8f9ba3] rounded-l-lg bg-[#c8dcea]">
        <span className="size-2 rounded-full bg-[#4a545b]" />
      </div>
    </div>
  </aside>
);

/* ---------- graphics area ---------- */

const PLANE = '#9a6a3c';
const DATUM = '#f59a14';
const MARK = '#fd3a3a';

const Watermark = () => (
  <g fill="#d5deeb">
    <text x="2648" y="1865" fontSize="138" fontWeight="700" stroke="#d5deeb" strokeWidth="3" fontFamily="Liberation Sans, Arial, sans-serif">Bai</text>
    <ellipse cx="2888" cy="1750" rx="23" ry="30" />
    <ellipse cx="2931" cy="1706" rx="22" ry="31" />
    <ellipse cx="2986" cy="1710" rx="23" ry="30" />
    <ellipse cx="3020" cy="1763" rx="23" ry="29" />
    <path d="M2953 1754C2970 1754 2980 1768 2988 1782C3000 1802 3030 1816 3030 1842C3030 1862 3018 1870 3002 1870C2984 1870 2972 1865 2955 1865C2938 1865 2926 1869 2910 1869C2890 1868 2877 1856 2877 1836C2877 1814 2906 1802 2920 1780C2930 1764 2938 1754 2953 1754Z" />
    <text x="2899" y="1854" fontSize="90" fontWeight="400" fill="#6585b0" stroke="#6585b0" strokeWidth="3" fontFamily="Liberation Sans, Arial, sans-serif">du</text>
    <text x="3052" y="1856" fontSize="103" fontWeight="900" fontFamily="Noto Sans CJK SC, sans-serif">经验</text>
    <text x="2654" y="1948" fontSize="70" fontWeight="500" fill="#e3eaf3" fontFamily="Noto Sans, sans-serif">jingyan.baidu.com</text>
  </g>
);

const GraphicsArea = () => (
  <main className="flex-1 min-w-0 bg-linear-to-b from-[#c6dbec] via-[#91abcb] to-[#5b7ba8]">
    <svg viewBox="667 312 2612 1728" className="w-full h-full" fill="none">
      {/* datum planes */}
      <path d="M1343 1160V742H1803M1862 742H2271V1155M2271 1200V1608M2270 1628H1343V1193" stroke={PLANE} strokeWidth="3" />
      <path d="M1803 742V1147M1811 756V1147M1803 1276V1628M1811 1276V1628M1432 1182H2264M1432 1187H2264" stroke={PLANE} strokeWidth="3" />
      <path d="M667 1185H3279" stroke={DATUM} strokeWidth="3" strokeDasharray="13 12" />
      <path d="M1808 312V2040" stroke={DATUM} strokeWidth="3" strokeDasharray="13 12" />

      <circle cx="1807" cy="1184" r="457" stroke="#e8434f" strokeWidth="3" />

      {/* diameter dimension */}
      <path d="M1475 873L1757 1137M1810 1186L2139 1496" stroke="#14144a" strokeWidth="2" />
      <path d="M1475 873L1497 884L1489 893ZM2139 1496L2117 1485L2125 1476Z" stroke="#14144a" strokeWidth="2" />
      <path d="M1475 873L1487 879L1482 884ZM2139 1496L2127 1490L2132 1485Z" fill="#14144a" />

      <g fill={PLANE} fontSize="28" fontFamily="Liberation Mono, monospace">
        <text x="1809" y="740">TOP</text>
        <text x="1347" y="1183">FRONT</text>
        <text x="2272" y="1625">RIGHT</text>
        <text x="1831" y="1167">PRT_CSYS_DEF</text>
        <text x="1726" y="1203">y</text>
        <text x="2338" y="1192">0</text>
      </g>
      <text x="1722" y="1171" fontSize="32" fill="#14144a" fontFamily="Liberation Mono, monospace">Ø10000</text>

      {/* spin center */}
      <path d="M1750 1185H1790" stroke="#26e83a" strokeWidth="3" />
      <path d="M1808 1190V1240" stroke="#35e6f2" strokeWidth="4" />
      <path d="M1752 1179L1764 1185L1752 1191Z" fill="#26e83a" />
      <circle cx="1807" cy="1235" r="5" fill="#22e8b0" />
      <circle cx="1807" cy="1185" r="6" fill="#3e5ff0" stroke="#d8445c" strokeWidth="2" />
      <path d="M1830 1185H1842M1856 1185H1868" stroke={PLANE} strokeWidth="5" />
      <path d="M1803 1250H1809L1803 1266H1809" stroke={PLANE} strokeWidth="2" />

      <g fill="#ffff10" fontWeight="700" fontFamily="Noto Sans CJK SC, sans-serif">
        <text x="2265" y="1181" fontSize="17">截面</text>
        <text x="2316" y="1183" fontSize="28" fontWeight="400" fontFamily="Liberation Mono, monospace">0</text>
      </g>

      {/* call-outs */}
      <path d="M1676.5 1091.5H1901.5V1210.5H1676.5ZM2166.5 1139.5H2352.5V1196.5H2166.5Z" stroke={MARK} strokeWidth="7" />
      <path d="M1911 1087L1919 1063L1924 1067L2022 976L1931 1074L1936 1078ZM2327 1123L2336 1098L2340 1103L2492 954L2347 1110L2351 1114Z" fill={MARK} />

      <Watermark />
    </svg>
  </main>
);

export default function App() {
  return (
    <div className="relative h-screen flex flex-col overflow-hidden border-2 border-[#4d4d4d] bg-[#dbe9f3] font-['Open_Sans','Noto_Sans_CJK_SC',sans-serif]">
      <TitleBar />
      <MenuBar />
      <TopToolbar />
      <StatusBar />
      <div className="flex-1 min-h-0 flex border-t-2 border-[#b9cfde]">
        <ModelTree />
        <GraphicsArea />
        <SideToolbar />
      </div>
      <div className="absolute right-0 bottom-[75px] w-[298px] whitespace-nowrap text-[#a9a9a9]/80 pointer-events-none">
        <p className="text-[49px] leading-[60px]">激活 Window</p>
        <p className="text-[37px] leading-[52px]">转到“设置”以激活</p>
      </div>
    </div>
  );
}
